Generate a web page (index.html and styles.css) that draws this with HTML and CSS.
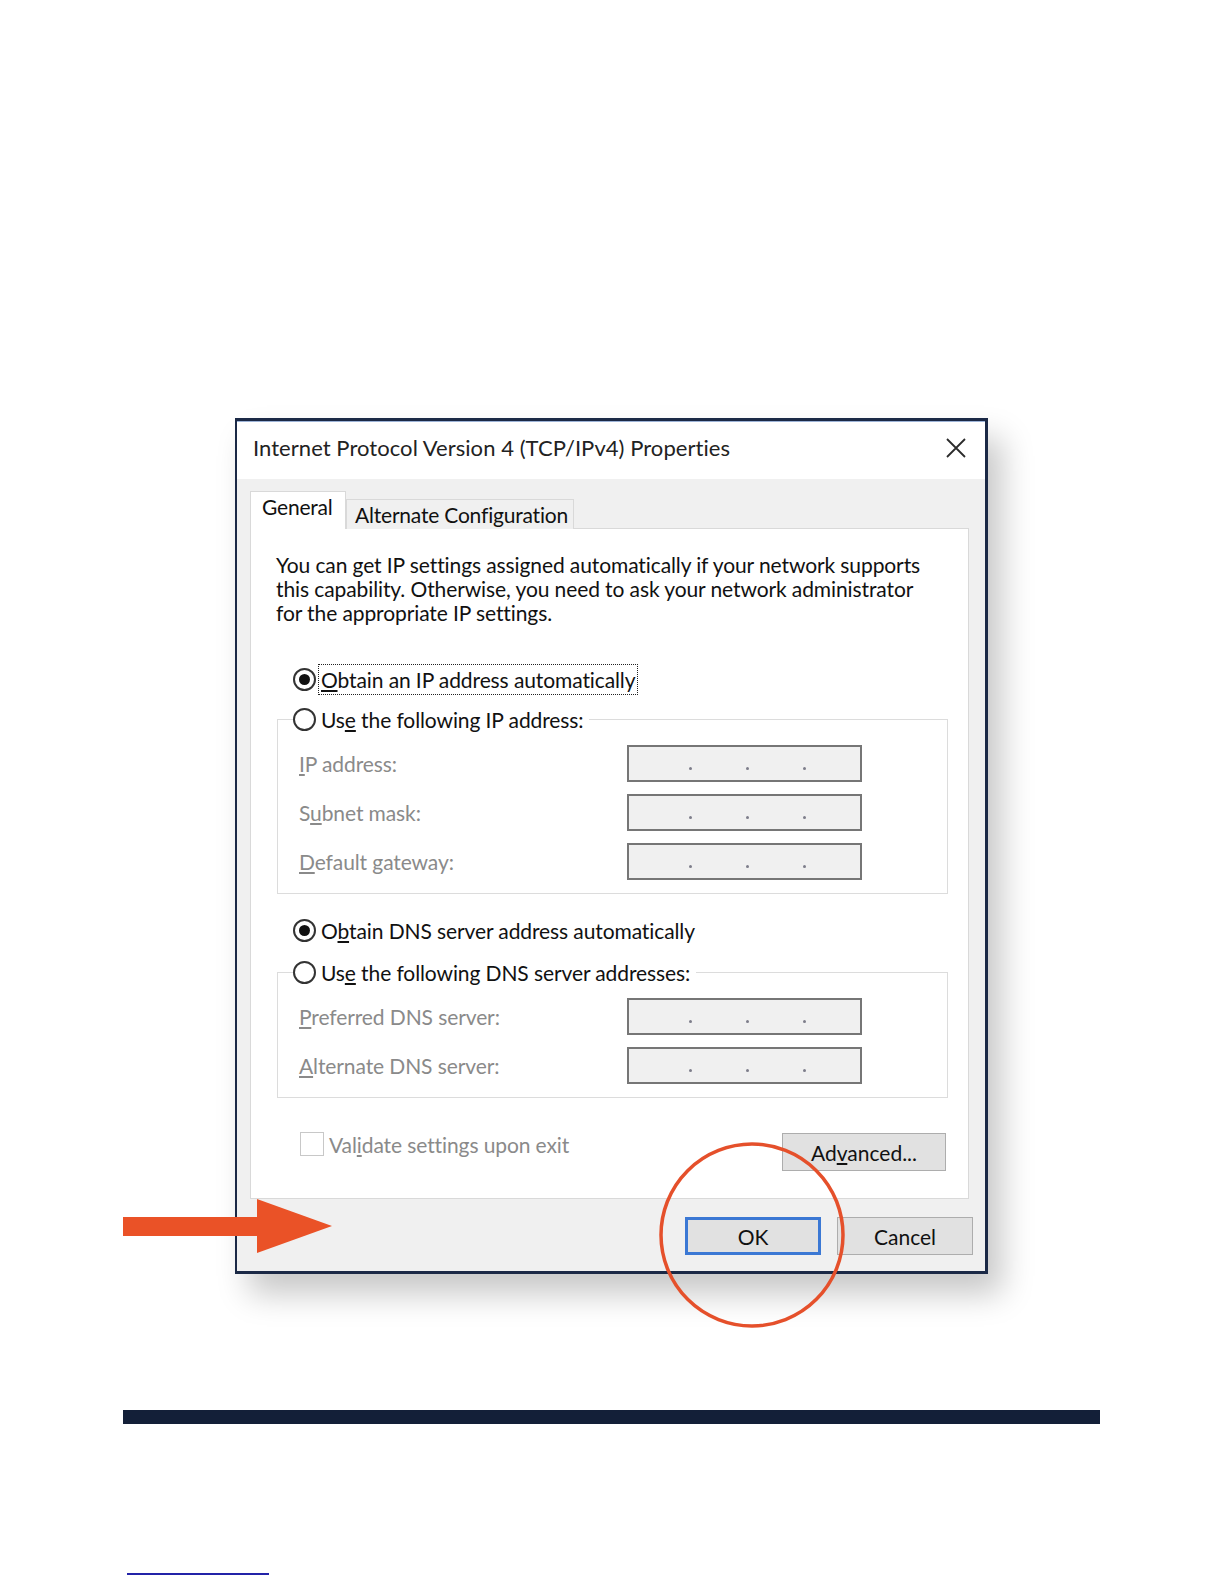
FILE: index.html
```html
<!DOCTYPE html>
<html lang="en">
  <head>
    <meta charset="utf-8" />
    <meta name="viewport" content="width=device-width, initial-scale=1" />
    <title>TCP/IPv4 Properties - OK</title>
    <link rel="stylesheet" href="styles.css">
  </head>
  <body>
    <main class="page">
      <figure class="shot">
        <div class="dialog">
          <div class="titlebar">
            <span class="title">Internet Protocol Version 4 (TCP/IPv4) Properties</span>
            <svg class="close" width="20" height="20" viewBox="0 0 20 20">
              <path d="M1 1 L19 19 M19 1 L1 19" stroke="#2b2b2b" stroke-width="1.8" fill="none" />
            </svg>
          </div>

          <div class="body">
            <div class="tabs">
              <span class="tab active">General</span>
              <span class="tab">Alternate Configuration</span>
            </div>

            <div class="panel">
              <p class="intro">
                You can get IP settings assigned automatically if your network supports<br>
                this capability. Otherwise, you need to ask your network administrator<br>
                for the appropriate IP settings.
              </p>

              <div class="radio first">
                <span class="dot checked"></span>
                <span class="focus"><u>O</u>btain an IP address automatically</span>
              </div>

              <fieldset class="group">
                <legend class="radio">
                  <span class="dot"></span>
                  <span>Us<u>e</u> the following IP address:</span>
                </legend>
                <div class="field">
                  <span class="lbl"><u>I</u>P address:</span>
                  <span class="ipbox"><i></i><i></i><i></i></span>
                </div>
                <div class="field">
                  <span class="lbl">S<u>u</u>bnet mask:</span>
                  <span class="ipbox"><i></i><i></i><i></i></span>
                </div>
                <div class="field">
                  <span class="lbl"><u>D</u>efault gateway:</span>
                  <span class="ipbox"><i></i><i></i><i></i></span>
                </div>
              </fieldset>

              <div class="radio second">
                <span class="dot checked"></span>
                <span>O<u>b</u>tain DNS server address automatically</span>
              </div>

              <fieldset class="group dns">
                <legend class="radio">
                  <span class="dot"></span>
                  <span>Us<u>e</u> the following DNS server addresses:</span>
                </legend>
                <div class="field">
                  <span class="lbl"><u>P</u>referred DNS server:</span>
                  <span class="ipbox"><i></i><i></i><i></i></span>
                </div>
                <div class="field">
                  <span class="lbl"><u>A</u>lternate DNS server:</span>
                  <span class="ipbox"><i></i><i></i><i></i></span>
                </div>
              </fieldset>

              <div class="checkrow">
                <label class="check"><span class="box"></span><span>Val<u>i</u>date settings upon exit</span></label>
                <button class="btn advanced" type="button">Ad<u>v</u>anced...</button>
              </div>
            </div>

            <div class="buttons">
              <button class="btn ok" type="button">OK</button>
              <button class="btn" type="button">Cancel</button>
            </div>
          </div>
        </div>

        <!-- annotations drawn over the screenshot -->
        <svg class="arrow" width="210" height="56" viewBox="0 0 210 56">
          <rect x="0" y="18" width="136" height="19" fill="#ea5227" />
          <polygon points="134,0 209,27 134,54" fill="#ea5227" />
        </svg>
        <svg class="ring" width="192" height="192" viewBox="0 0 192 192">
          <circle cx="96" cy="96" r="91" stroke="#e5502b" stroke-width="3.5" fill="none" />
        </svg>
      </figure>

      <div class="rule"></div>
      <a class="link" href="#"></a>
    </main>
  </body>
</html>
```

FILE: styles.css
```css
body {
  margin: 0;
  background: #fff;
  font-family: Lato, "Liberation Sans", sans-serif;
  color: #111;
}

.page {
  padding-left: 123px;
  width: 977px;
}

.shot {
  position: relative;
  margin: 418px 0 0 0;
  padding-left: 112px;
}

/* the dialog window */
.dialog {
  width: 748px;
  border: 3px solid #1b2946;
  border-left-width: 2px;
  background: #fff;
  box-shadow: 14px 20px 30px rgba(0, 0, 0, 0.22);
}

.titlebar {
  height: 51px;
  display: flex;
  align-items: center;
  justify-content: space-between;
  padding: 0 19px 6px 16px;
  border-top: 1px solid #9db4d8;
}

.title {
  font-size: 22px;
  color: #222;
  letter-spacing: 0.05px;
}

.body {
  background: #f0f0f0;
  padding: 12px 16px 16px 13px;
}

.tabs {
  display: flex;
  align-items: flex-end;
  height: 38px;
  margin-bottom: -1px;
  position: relative;
}

.tab {
  height: 30px;
  width: 228px;
  box-sizing: border-box;
  border: 1px solid #d9d9d9;
  border-bottom: none;
  background: #f0f0f0;
  font-size: 21px;
  line-height: 30px;
  padding-left: 8px;
  letter-spacing: -0.2px;
  white-space: nowrap;
}

.tab.active {
  width: 96px;
  height: 38px;
  background: #fff;
  line-height: 30px;
  padding-left: 11px;
}

.panel {
  background: #fff;
  border: 1px solid #d9d9d9;
  padding: 1px 0 27px 0;
}

.intro {
  margin: 23px 0 0 25px;
  font-size: 21px;
  line-height: 24px;
  letter-spacing: -0.1px;
  white-space: nowrap;
}

.radio {
  display: flex;
  align-items: center;
  gap: 5px;
  height: 30px;
  font-size: 21px;
  letter-spacing: -0.1px;
}

.radio.first {
  margin: 39px 0 0 42px;
}

.radio.second {
  margin: 21px 0 0 42px;
}

.dot {
  width: 23px;
  height: 23px;
  box-sizing: border-box;
  border: 2px solid #333;
  border-radius: 50%;
  background: #fff;
  position: relative;
}

.dot.checked::after {
  content: "";
  position: absolute;
  left: 4px;
  top: 4px;
  width: 11px;
  height: 11px;
  border-radius: 50%;
  background: #111;
}

.focus {
  outline: 1px dotted #222;
  outline-offset: 2px;
}

.group {
  margin: 10px 20px 0 26px;
  padding: 0 0 13px 21px;
  border: 1px solid #dcdcdc;
}

.group.dns {
  margin-top: 12px;
}

.group legend {
  padding: 0 6px 0 0;
  margin-left: -6px;
}

.field {
  display: flex;
  align-items: center;
  height: 37px;
  margin-top: 12px;
}

.field:first-of-type {
  margin-top: 11px;
}

.lbl {
  width: 328px;
  font-size: 21px;
  letter-spacing: -0.1px;
  color: #8a8a8a;
}

.ipbox {
  width: 235px;
  height: 37px;
  box-sizing: border-box;
  border: 2px solid #767676;
  background: #f0f0f0;
  display: flex;
  align-items: flex-end;
  gap: 54px;
  padding: 0 0 10px 60px;
}

.ipbox i {
  width: 3px;
  height: 3px;
  border-radius: 50%;
  background: #7d7d8a;
}

.checkrow {
  display: flex;
  justify-content: space-between;
  align-items: flex-start;
  margin: 33px 22px 0 49px;
}

.check {
  display: flex;
  align-items: center;
  gap: 5px;
  height: 26px;
  font-size: 21px;
  letter-spacing: -0.1px;
  color: #8a8a8a;
}

.box {
  width: 24px;
  height: 24px;
  box-sizing: border-box;
  border: 1px solid #c8c8c8;
  background: #fff;
}

.btn {
  font-family: Lato, "Liberation Sans", sans-serif;
  font-size: 21px;
  color: #111;
  height: 38px;
  box-sizing: border-box;
  border: 1px solid #adadad;
  background: #e1e1e1;
  padding: 0;
}

.btn.advanced {
  width: 164px;
  margin-top: 2px;
}

.buttons {
  display: flex;
  justify-content: flex-end;
  gap: 16px;
  margin: 18px -4px 0 0;
}

.buttons .btn {
  width: 136px;
}

.btn.ok {
  border: 3px solid #3b78d4;
}

/* annotations */
.arrow {
  position: absolute;
  left: 0;
  top: 781px;
}

.ring {
  position: absolute;
  left: 533px;
  top: 721px;
}

.rule {
  height: 14px;
  background: #131f38;
  margin-top: 136px;
}

.link {
  display: block;
  width: 142px;
  height: 2px;
  background: #2323a8;
  margin: 149px 0 0 4px;
}
```
